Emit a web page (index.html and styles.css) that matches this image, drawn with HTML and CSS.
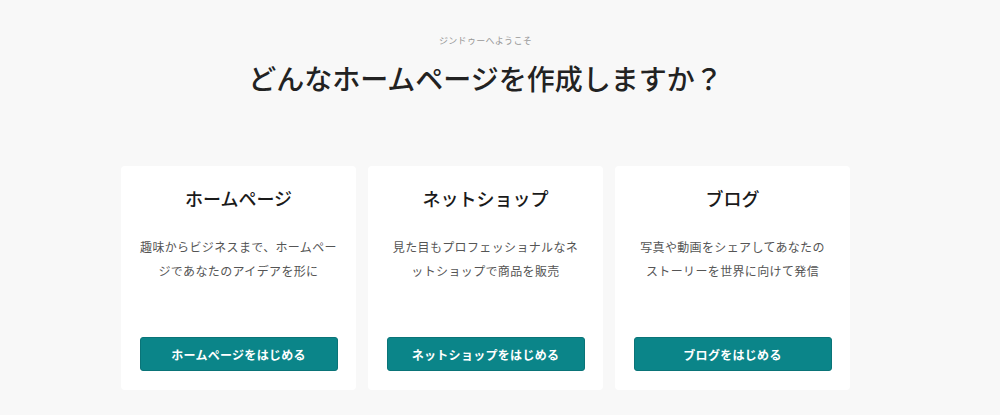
FILE: index.html
```html
<!DOCTYPE html>
<html lang="ja">
<head>
<meta charset="utf-8">
<title>ジンドゥー</title>
<link rel="stylesheet" href="styles.css">
</head>
<body>
<main class="page">
  <header class="intro">
    <p class="welcome">ジンドゥーへようこそ</p>
    <h1 class="headline">どんなホームページを作成しますか？</h1>
  </header>
  <section class="cards">
    <article class="card">
      <h2 class="card-title">ホームページ</h2>
      <p class="card-text">趣味からビジネスまで、ホームペー<br>ジであなたのアイデアを形に</p>
      <a class="card-button" href="#">ホームページをはじめる</a>
    </article>
    <article class="card">
      <h2 class="card-title">ネットショップ</h2>
      <p class="card-text">見た目もプロフェッショナルなネ<br>ットショップで商品を販売</p>
      <a class="card-button" href="#">ネットショップをはじめる</a>
    </article>
    <article class="card">
      <h2 class="card-title">ブログ</h2>
      <p class="card-text">写真や動画をシェアしてあなたの<br>ストーリーを世界に向けて発信</p>
      <a class="card-button" href="#">ブログをはじめる</a>
    </article>
  </section>
</main>
</body>
</html>
```

FILE: styles.css
```css
* { box-sizing: border-box; }

html, body {
  margin: 0;
  padding: 0;
  background: #f8f8f8;
}

body {
  font-family: "Noto Sans CJK JP", "Noto Sans", sans-serif;
  color: #222;
}

.page {
  width: 971px;
  display: flex;
  flex-direction: column;
  align-items: center;
  padding-top: 35px;
}

.intro {
  display: flex;
  flex-direction: column;
  align-items: center;
}

.welcome {
  margin: 0;
  font-size: 9px;
  letter-spacing: 0.3px;
  line-height: 12px;
  color: #999;
}

.headline {
  margin: 13px 0 0;
  font-size: 28px;
  line-height: 36px;
  font-weight: 500;
  color: #222;
}

.cards {
  margin-top: 70px;
  display: flex;
  gap: 12px;
}

.card {
  width: 235px;
  height: 224px;
  background: #fff;
  border-radius: 4px;
  padding: 20px 18px 19px;
  display: flex;
  flex-direction: column;
  align-items: center;
}

.card-title {
  margin: 0;
  font-size: 18px;
  line-height: 24px;
  font-weight: 500;
  color: #1a1a1a;
}

.card-text {
  margin: 25px 0 0;
  font-size: 12px;
  letter-spacing: 0.36px;
  line-height: 24px;
  color: #555;
  text-align: center;
}

.card-button {
  margin-top: auto;
  width: 198px;
  height: 34px;
  display: flex;
  align-items: center;
  justify-content: center;
  background: #0b8589;
  border: 1px solid #0a7478;
  border-radius: 3px;
  color: #fff;
  font-size: 12px;
  letter-spacing: 0.3px;
  font-weight: 700;
  text-decoration: none;
}
```
